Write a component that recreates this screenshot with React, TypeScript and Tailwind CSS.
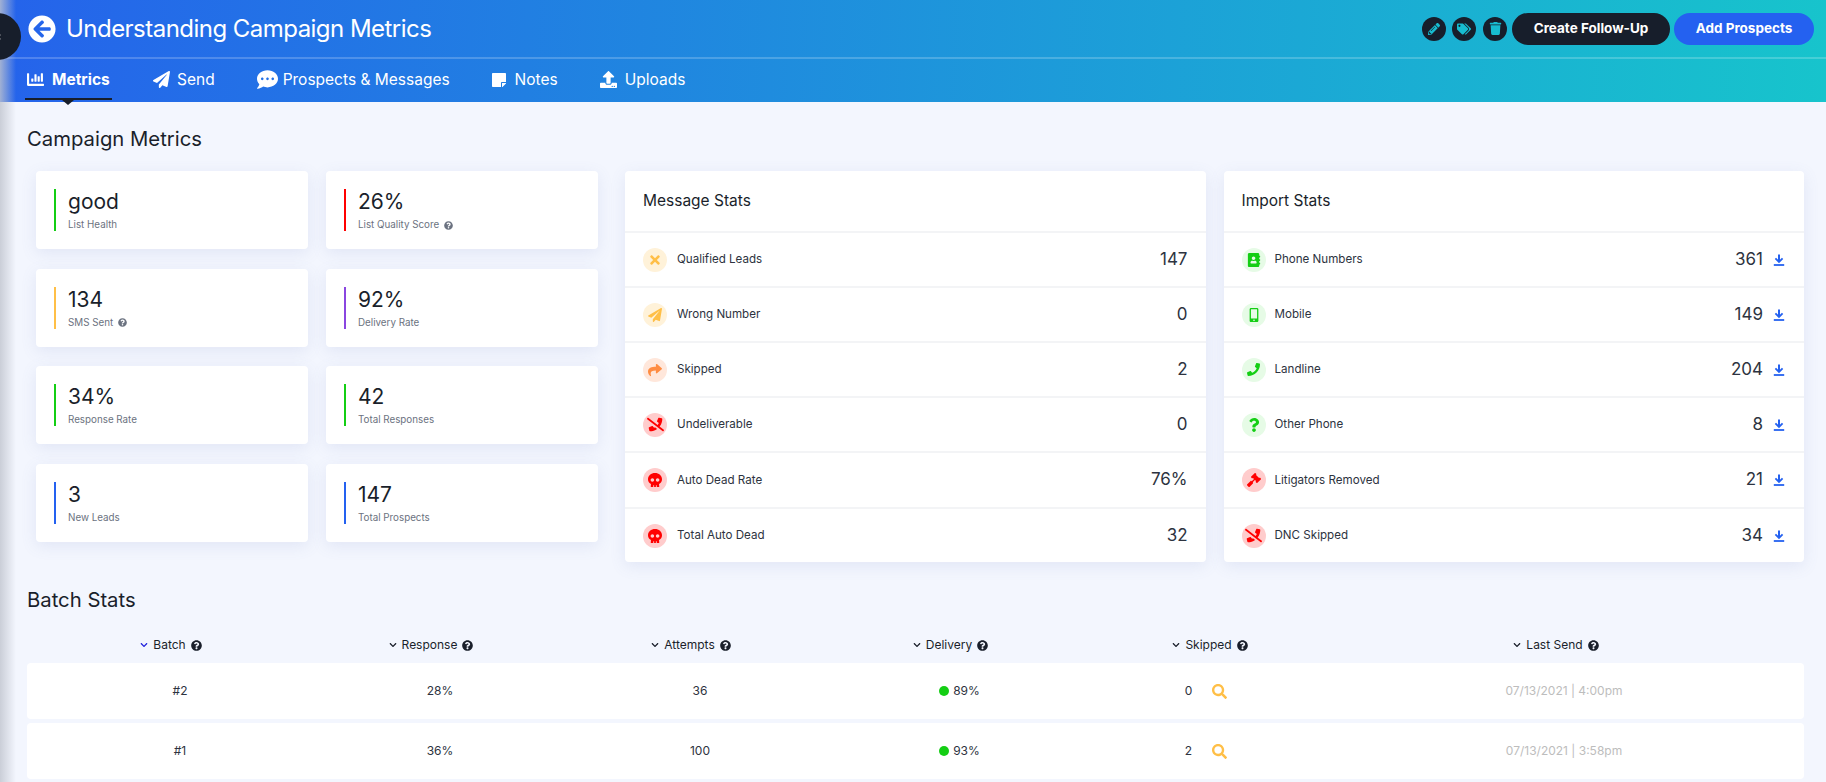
import {
  FaArrowCircleLeft,
  FaPencilAlt,
  FaTags,
  FaTrash,
  FaChartBar,
  FaPaperPlane,
  FaCommentDots,
  FaStickyNote,
  FaUpload,
  FaTimes,
  FaShare,
  FaPhoneSlash,
  FaSkull,
  FaAddressBook,
  FaMobileAlt,
  FaPhone,
  FaQuestion,
  FaGavel,
  FaChevronDown,
  FaChevronLeft,
  FaQuestionCircle,
  FaSearch,
} from 'react-icons/fa';

const tabs = [
  { label: 'Metrics', icon: FaChartBar, active: true, cls: 'w-[87px]', iconCls: 'text-[17px]' },
  { label: 'Send', icon: FaPaperPlane, cls: 'ml-[39px]', iconCls: 'text-[17px]', gap: 'gap-[7px]' },
  { label: 'Prospects & Messages', icon: FaCommentDots, cls: 'ml-[40px]', iconCls: 'text-[21px]', gap: 'gap-[5px]' },
  { label: 'Notes', icon: FaStickyNote, cls: 'ml-[39px]', iconCls: 'text-[16px]' },
  { label: 'Uploads', icon: FaUpload, cls: 'ml-[40px]', iconCls: 'text-[17px]' },
];

const metrics = [
  { value: 'good', label: 'List Health', bar: 'bg-[#14ce14]' },
  { value: '26%', label: 'List Quality Score', bar: 'bg-[#ff0000]', help: true },
  { value: '134', label: 'SMS Sent', bar: 'bg-[#ffbf47]', help: true },
  { value: '92%', label: 'Delivery Rate', bar: 'bg-[#8a46e0]' },
  { value: '34%', label: 'Response Rate', bar: 'bg-[#14ce14]' },
  { value: '42', label: 'Total Responses', bar: 'bg-[#14ce14]' },
  { value: '3', label: 'New Leads', bar: 'bg-[#2461f0]' },
  { value: '147', label: 'Total Prospects', bar: 'bg-[#2461f0]' },
];

const yellow = 'bg-[#fff2d9] text-[#ffbf47]';
const orange = 'bg-[#ffe7db] text-[#ff8c42]';
const red = 'bg-[#ffcccc] text-[#ff0000]';
const green = 'bg-[#e6fbe6] text-[#14ce14]';

const messageStats = [
  { label: 'Qualified Leads', value: '147', icon: FaTimes, tone: yellow, size: 'text-[14px]' },
  { label: 'Wrong Number', value: '0', icon: FaPaperPlane, tone: yellow, size: 'text-[14px]' },
  { label: 'Skipped', value: '2', icon: FaShare, tone: orange, size: 'text-[14px]' },
  { label: 'Undeliverable', value: '0', icon: FaPhoneSlash, tone: red, size: 'text-[17px]' },
  { label: 'Auto Dead Rate', value: '76%', icon: FaSkull, tone: red, size: 'text-[14px]' },
  { label: 'Total Auto Dead', value: '32', icon: FaSkull, tone: red, size: 'text-[14px]' },
];

const importStats = [
  { label: 'Phone Numbers', value: '361', icon: FaAddressBook, tone: green, size: 'text-[14px]' },
  { label: 'Mobile', value: '149', icon: FaMobileAlt, tone: green, size: 'text-[14px]' },
  { label: 'Landline', value: '204', icon: FaPhone, tone: green, size: 'text-[13px]' },
  { label: 'Other Phone', value: '8', icon: FaQuestion, tone: green, size: 'text-[14px]' },
  { label: 'Litigators Removed', value: '21', icon: FaGavel, tone: red, size: 'text-[14px]' },
  { label: 'DNC Skipped', value: '34', icon: FaPhoneSlash, tone: red, size: 'text-[17px]' },
];

const columns = ['Batch', 'Response', 'Attempts', 'Delivery', 'Skipped', 'Last Send'];

const batches = [
  { id: '#2', response: '28%', attempts: '36', delivery: '89%', skipped: '0', last: '07/13/2021 | 4:00pm' },
  { id: '#1', response: '36%', attempts: '100', delivery: '93%', skipped: '2', last: '07/13/2021 | 3:58pm' },
];

function DownloadIcon() {
  return (
    <svg viewBox="0 0 12 12" className="w-[12px] h-[12px] text-[#2461f0]" fill="none" stroke="currentColor">
      <path d="M6 0.5V7.5" strokeWidth="2" />
      <path d="M2.4 4.4L6 8L9.6 4.4" strokeWidth="1.8" />
      <path d="M0.8 11H11.2" strokeWidth="1.8" />
    </svg>
  );
}

function StatCard({ title, rows, download }: { title: string; rows: typeof messageStats; download?: boolean }) {
  return (
    <div className="flex-1 bg-white rounded shadow-[0_4px_16px_rgba(100,116,180,0.12)]">
      <div className="h-[60px] pl-[18px] flex items-center text-[15.5px] text-[#1a1f2b]">{title}</div>
      {rows.map((row, i) => {
        const Icon = row.icon;
        return (
          <div
            key={row.label}
            className={`border-t-2 border-[#f3f4f6] pl-[18px] flex items-center ${i === 4 ? 'h-[56px]' : 'h-[55px]'} ${download ? 'pr-[19px]' : 'pr-[18px]'}`}
          >
            <div className={`w-[24px] h-[24px] rounded-full flex items-center justify-center ${row.size} ${row.tone}`}>
              <Icon />
            </div>
            <span className={`pt-[1px] text-[11.6px] text-[#2d3340] ${download ? 'ml-[9px]' : 'ml-[10px]'}`}>{row.label}</span>
            <span className="ml-auto text-[17px] text-[#2d3340]">{row.value}</span>
            {download && (
              <span className="ml-[10px]">
                <DownloadIcon />
              </span>
            )}
          </div>
        );
      })}
    </div>
  );
}

export default function App() {
  return (
    <div className="relative w-[1826px] h-[782px] overflow-hidden bg-[#f3f6fe] font-['Inter',sans-serif]">
      <header className="h-[102px] bg-[linear-gradient(92deg,#2563eb,#17c4cc)] text-white">
        <div className="h-[59px] flex items-center pl-[28px] pr-[12px] border-b-2 border-white/20">
          <FaArrowCircleLeft className="text-[28px]" />
          <h1 className="ml-[10px] text-[24px] tracking-[-0.53px] font-normal">Understanding Campaign Metrics</h1>
          <div className="ml-auto flex items-center">
            <span className="w-[24px] h-[24px] rounded-full bg-[#171e2b] text-[#17bcd0] flex items-center justify-center text-[12px]">
              <FaPencilAlt />
            </span>
            <span className="ml-[6px] w-[24px] h-[24px] rounded-full bg-[#171e2b] text-[#17bcd0] flex items-center justify-center text-[14px]">
              <FaTags />
            </span>
            <span className="ml-[7px] w-[24px] h-[24px] rounded-full bg-[#171e2b] text-[#17bcd0] flex items-center justify-center text-[13px]">
              <FaTrash />
            </span>
            <button className="ml-[5px] w-[158px] h-[32px] rounded-full bg-[#171e2b] text-[13.5px] font-bold">
              Create Follow-Up
            </button>
            <button className="ml-[4px] w-[140px] h-[32px] rounded-full bg-[#2461f0] text-[13.5px] font-bold">
              Add Prospects
            </button>
          </div>
        </div>
        <nav className="h-[41px] flex pl-[25px]">
          {tabs.map(tab => {
            const Icon = tab.icon;
            return (
              <div
                key={tab.label}
                className={`relative h-full flex items-center pl-[2px] text-[15.5px] ${tab.gap ?? 'gap-[8px]'} ${tab.cls} ${tab.active ? 'font-bold' : ''}`}
              >
                <Icon className={tab.iconCls} />
                <span>{tab.label}</span>
                {tab.active && (
                  <>
                    <span className="absolute left-0 right-0 bottom-0 h-[2px] bg-[#171e2b]" />
                    <span className="absolute left-[37px] top-full w-0 h-0 border-x-[6px] border-x-transparent border-t-[5px] border-t-[#171e2b]" />
                  </>
                )}
              </div>
            );
          })}
        </nav>
      </header>

      <main className="pl-[27px] pr-[22px]">
        <h2 className="h-[69px] pt-[24px] text-[20.3px] leading-[26px] font-normal text-[#1a1f2b]">Campaign Metrics</h2>
        <div className="flex">
          <div className="ml-[9px] w-[562px] grid grid-cols-2 gap-x-[18px] gap-y-[19.6px] content-start">
            {metrics.map(m => (
              <div
                key={m.label}
                className="h-[78px] bg-white rounded shadow-[0_4px_16px_rgba(100,116,180,0.12)] pl-[18px] flex items-center"
              >
                <span className={`w-[2px] h-[42px] ${m.bar}`} />
                <div className="ml-[12px]">
                  <div className="text-[21px] leading-[28px] text-[#1a1f2b]">{m.value}</div>
                  <div className="mt-[2px] text-[9.8px] leading-[14px] text-[#6b7280] flex items-center gap-[5px]">
                    {m.label}
                    {m.help && <FaQuestionCircle className="text-[9px]" />}
                  </div>
                </div>
              </div>
            ))}
          </div>
          <div className="ml-[27px] flex-1 flex gap-[18px]">
            <StatCard title="Message Stats" rows={messageStats} />
            <StatCard title="Import Stats" rows={importStats} download />
          </div>
        </div>

        <h2 className="mt-[25px] h-[26px] text-[20.3px] leading-[26px] font-normal text-[#1a1f2b]">Batch Stats</h2>
        <div className="mt-[14px] h-[36px] pl-[14px] pr-[32px] grid grid-cols-[260px_260px_260px_259px_260px_1fr] items-center text-[12px] text-[#1a1f2b]">
          {columns.map((col, i) => (
            <div key={col} className="flex items-center justify-center">
              <FaChevronDown className={`text-[8px] mr-[5px] ${i === 0 ? 'text-[#2222dd]' : ''}`} />
              {col}
              <FaQuestionCircle className="text-[11px] ml-[5px]" />
            </div>
          ))}
        </div>
        {batches.map(b => (
          <div
            key={b.id}
            className="mb-[4px] h-[56px] bg-white rounded pl-[14px] pr-[32px] grid grid-cols-[260px_260px_260px_259px_260px_1fr] items-center text-[12px] text-[#2d3340]"
          >
            <div className="text-center pl-[18px]">{b.id}</div>
            <div className="text-center pl-[18px]">{b.response}</div>
            <div className="text-center pl-[18px]">{b.attempts}</div>
            <div className="flex items-center justify-center pl-[18px] gap-[4px]">
              <span className="w-[10px] h-[10px] rounded-full bg-[#14ce14]" />
              {b.delivery}
            </div>
            <div className="flex items-center justify-center pr-[8px] gap-[20px]">
              {b.skipped}
              <FaSearch className="text-[15px] text-[#ffbf47]" />
            </div>
            <div className="text-center pl-[16px] text-[#bdbdbd]">{b.last}</div>
          </div>
        ))}
      </main>

      {/* collapsed sidebar edge */}
      <div className="absolute inset-y-0 left-0 w-[16px] bg-gradient-to-r from-[#c0c4ce]/80 to-transparent" />
      <div className="absolute left-[-26px] top-[13px] w-[47px] h-[47px] rounded-full bg-[#171e2b] flex items-center justify-end pr-[19px] text-white">
        <FaChevronLeft className="text-[6px]" />
      </div>
    </div>
  );
}
